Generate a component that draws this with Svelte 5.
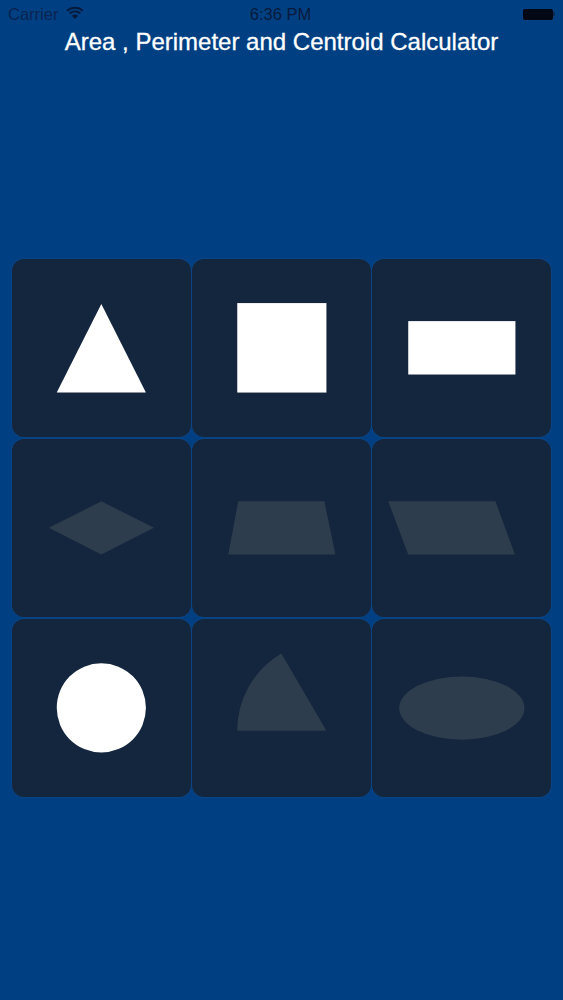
<script>
    // shapes are drawn in a 178 x 178 cell
    const shapes = [
        { name: 'triangle', on: true },
        { name: 'square', on: true },
        { name: 'rectangle', on: true },
        { name: 'rhombus', on: false },
        { name: 'trapezoid', on: false },
        { name: 'parallelogram', on: false },
        { name: 'circle', on: true },
        { name: 'sector', on: false },
        { name: 'ellipse', on: false }
    ];
</script>

<div class="screen">
    <div class="status">
        <div class="carrier">
            <span>Carrier</span>
            <svg class="wifi" viewBox="0 0 18 13" aria-hidden="true">
                <path d="M1 4.8 C5.5 0.6 12.5 0.6 17 4.8" />
                <path d="M3.6 7.6 C6.8 4.8 11.2 4.8 14.4 7.6" />
                <path d="M9 13 L5.8 9.8 C7.6 8.2 10.4 8.2 12.2 9.8 Z" class="fill" />
            </svg>
        </div>
        <span class="time">6:36 PM</span>
        <div class="battery"><i></i></div>
    </div>

    <h1>Area , Perimeter and Centroid Calculator</h1>

    <div class="grid">
        {#each shapes as shape}
            <button class="cell" class:on={shape.on} aria-label={shape.name}>
                <svg viewBox="0 0 178 178">
                    {#if shape.name === 'triangle'}
                        <polygon points="44.5,133.3 133.5,133.3 89,45" />
                    {:else if shape.name === 'square'}
                        <rect x="45" y="44" width="89" height="89.3" />
                    {:else if shape.name === 'rectangle'}
                        <rect x="36" y="62" width="107" height="53.3" />
                    {:else if shape.name === 'rhombus'}
                        <polygon points="36.5,88.7 89,62.2 141.5,88.7 89,115.2" />
                    {:else if shape.name === 'trapezoid'}
                        <polygon points="46,62.2 132,62.2 143,115.2 36,115.2" />
                    {:else if shape.name === 'parallelogram'}
                        <polygon points="16,62.2 123,62.2 142.5,115.2 36,115.2" />
                    {:else if shape.name === 'circle'}
                        <circle cx="89" cy="88.7" r="44.5" />
                    {:else if shape.name === 'sector'}
                        <path d="M45 111.5 A89 89 0 0 1 89 34.5 L134 111.5 Z" />
                    {:else}
                        <ellipse cx="89.5" cy="89" rx="62.5" ry="31.5" />
                    {/if}
                </svg>
            </button>
        {/each}
    </div>
</div>

<style>
    :global(body) {
        margin: 0;
        background-color: #004082;
    }

    .screen {
        height: 1000px;
        overflow: hidden;
        font-family: "Liberation Sans", Arial, sans-serif;
        background-color: #004082;
    }

    .status {
        height: 28px;
        padding: 0 10px 0 8px;
        display: grid;
        grid-template-columns: 1fr auto 1fr;
        align-items: center;
        font-size: 16.5px;
        color: #0a2350;
    }

    .carrier {
        display: flex;
        align-items: center;
        gap: 8px;
    }

    .wifi {
        width: 18px;
        height: 13px;
        margin-top: -3px;
    }

    .wifi path {
        fill: none;
        stroke: #061a3c;
        stroke-width: 2;
    }

    .wifi path.fill {
        fill: #061a3c;
        stroke: none;
    }

    .time {
        color: #061a3c;
    }

    .battery {
        justify-self: end;
        width: 30px;
        height: 11px;
        border-radius: 2px;
        background-color: #020814;
        position: relative;
    }

    .battery i {
        position: absolute;
        right: -2px;
        top: 3.5px;
        width: 2px;
        height: 4px;
        background-color: #0b2a55;
    }

    h1 {
        margin: 0;
        height: 27px;
        line-height: 27px;
        text-align: center;
        font-size: 24px;
        font-weight: normal;
        color: #fff;
        -webkit-text-stroke: 0.3px #fff;
    }

    .grid {
        margin: 204px 12px 0 12px;
        width: 539px;
        height: 538px;
        display: grid;
        grid-template-columns: repeat(3, minmax(0, 1fr));
        grid-template-rows: repeat(3, minmax(0, 1fr));
        gap: 1.5px;
    }

    .cell {
        padding: 0;
        border: 0;
        min-height: 0;
        overflow: hidden;
        border-radius: 12px;
        background-color: #14263d;
        box-shadow: 0 0 0 0.75px #0b4584;
    }

    .cell svg {
        display: block;
        width: 100%;
        height: 100%;
        fill: #2e3d4e;
    }

    .cell.on svg {
        fill: #fff;
    }
</style>
